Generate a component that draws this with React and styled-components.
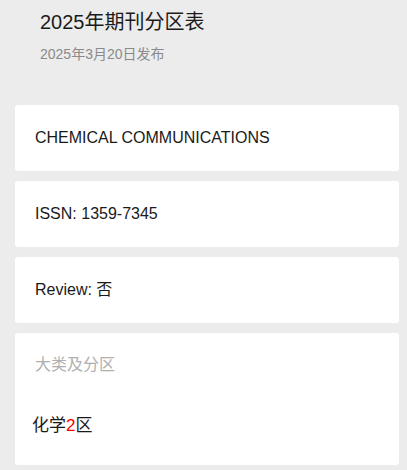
import React from 'react';
import styled, { createGlobalStyle } from 'styled-components';

const GlobalStyle = createGlobalStyle`
  html, body {
    margin: 0;
    padding: 0;
    background: #ececec;
    font-family: "Liberation Sans", Arial, "Noto Sans CJK SC", sans-serif;
  }
`;

const App = () => {
  return (
    <Page>
      <GlobalStyle />
      <Header>
        <Title>2025年期刊分区表</Title>
        <Published>2025年3月20日发布</Published>
      </Header>
      <List>
        <Card>
          <Line>CHEMICAL COMMUNICATIONS</Line>
        </Card>
        <Card>
          <Line>ISSN: 1359-7345</Line>
        </Card>
        <Card>
          <Line>Review: 否</Line>
        </Card>
        <Card tall>
          <Label>大类及分区</Label>
          <Zone>
            化学<Num>2</Num>区
          </Zone>
        </Card>
      </List>
    </Page>
  );
};

const Page = styled.div`
  width: 407px;
  min-height: 470px;
  box-sizing: border-box;
  padding: 8px 8px 6px 15px;
`;

const Header = styled.div`
  padding: 0 0 0 25px;
  height: 97px;
`;

const Title = styled.h1`
  margin: 0;
  font-size: 20px;
  font-weight: normal;
  line-height: 28px;
  color: #1b1b1b;
`;

const Published = styled.div`
  margin-top: 9px;
  font-size: 14px;
  line-height: 18px;
  color: #8a8a8a;
`;

const List = styled.div`
  display: flex;
  flex-direction: column;
  gap: 10px;
`;

const Card = styled.div`
  background: #ffffff;
  border-radius: 3px;
  padding: ${(p) => (p.tall ? '20px 20px 27px' : '21px 20px')};
`;

const Line = styled.div`
  font-size: 16px;
  line-height: 24px;
  color: #1a1a1a;
`;

const Label = styled.div`
  font-size: 16px;
  line-height: 24px;
  color: #b0b0b0;
`;

const Zone = styled.div`
  margin: 37px 0 0 -3px;
  font-size: 17px;
  line-height: 24px;
  color: #1a1a1a;
`;

const Num = styled.span`
  color: #ff0000;
`;

export default App;
